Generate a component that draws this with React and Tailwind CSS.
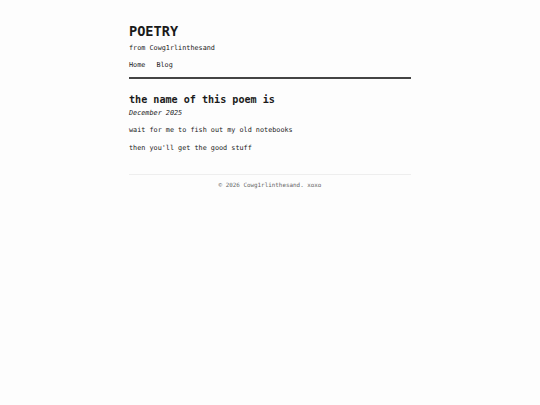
import React from "react";

export default function App() {
  return (
    <div className="min-h-[405px] bg-[#fdfdfd] text-[#1a1a1a] font-['DejaVu_Sans_Mono',monospace]">
      <div className="mx-auto w-[282px] pt-[23px]">
        <header className="border-b-2 border-[#444] pb-[7px]">
          <h1 className="text-[13.6px] leading-[16px] font-bold">POETRY</h1>
          <p className="mt-[4px] text-[6.8px] leading-[10px]">from Cowg1rlinthesand</p>
          <nav className="mt-[7px] flex gap-[11px] text-[6.8px] leading-[10px]">
            <a href="#">Home</a>
            <a href="#">Blog</a>
          </nav>
        </header>

        <main>
          <h2 className="mt-[15px] text-[10.1px] leading-[12px] font-bold">the name of this poem is</h2>
          <p className="mt-[2px] text-[6.8px] leading-[10px] italic">December 2025</p>
          <p className="mt-[7px] text-[6.8px] leading-[10px]">wait for me to fish out my old notebooks</p>
          <p className="mt-[8px] text-[6.8px] leading-[10px]">then you'll get the good stuff</p>
        </main>

        <footer className="mt-[21px] border-t border-[#eee] pt-[5px] text-center text-[5.9px] leading-[10px] text-[#666]">
          © 2026 Cowg1rlinthesand. xoxo
        </footer>
      </div>
    </div>
  );
}
